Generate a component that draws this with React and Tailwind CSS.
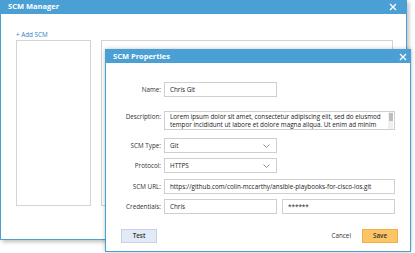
import React from 'react';

function Chevron() {
  return (
    <svg width="7" height="4" viewBox="0 0 7 4" className="mr-[6px]">
      <path d="M0.5 0.5 L3.5 3.5 L6.5 0.5" fill="none" stroke="#777" strokeWidth="0.8" />
    </svg>
  );
}

function CloseX() {
  return (
    <svg width="8" height="8" viewBox="0 0 8 8">
      <path d="M1 1 L7 7 M7 1 L1 7" stroke="#fff" strokeWidth="1.3" />
    </svg>
  );
}

function Row({ label, className = '', labelClass = 'leading-[15px]', children }) {
  return (
    <div className={`flex items-start ${className}`}>
      <div className={`w-[58px] pr-[3px] text-right text-[#333] ${labelClass}`}>{label}</div>
      {children}
    </div>
  );
}

export default function App() {
  return (
    <div className="relative w-[415px] h-[253px] bg-white overflow-hidden text-[6.3px]" style={{ fontFamily: '"Open Sans", "Noto Sans", sans-serif' }}>
      {/* SCM Manager */}
      <div className="w-[407px] h-[240px] border border-[#4a9fd5] border-t-0 bg-white shadow-[2px_2px_4px_rgba(0,0,0,0.25)]">
        <div className="h-[14px] bg-[#4a9fd5] flex items-center justify-between pl-[7px] pr-[9px]">
          <span className="text-white font-bold text-[7.5px]">SCM Manager</span>
          <CloseX />
        </div>
        <div className="pl-[15px] pt-[16px]">
          <div className="text-[#2f7fc4] leading-[9px] h-[10px]">+ Add SCM</div>
          <div className="flex gap-[10px]">
            <div className="w-[75px] h-[166px] border border-[#d4d4d4]" />
            <div className="w-[292px] h-[166px] border border-[#d4d4d4]" />
          </div>
        </div>
      </div>

      {/* SCM Properties */}
      <div className="absolute left-[105px] top-[49px] w-[306px] h-[203px] bg-white border border-[#4a9fd5] shadow-[0_0_4px_rgba(0,0,0,0.25)]">
        <div className="h-[13px] bg-[#4a9fd5] flex items-center justify-between pl-[7px] pr-[3px]">
          <span className="text-white font-bold text-[7.5px]">SCM Properties</span>
          <CloseX />
        </div>
        <div className="pt-[19px]">
          <Row label="Name:">
            <div className="w-[113px] h-[15px] border border-[#cfcfcf] px-[5px] leading-[13px] text-[#222]">Chris Git</div>
          </Row>
          <Row label="Description:" labelClass="leading-[8px] pt-[2px]" className="mt-[14px]">
            <div className="relative w-[231px] h-[19px] border border-[#cfcfcf] pl-[5px] pr-[10px] pt-[1px] leading-[8px] text-[#222] overflow-hidden">
              <div className="whitespace-nowrap">Lorem ipsum dolor sit amet, consectetur adipiscing elit, sed do eiusmod</div>
              <div className="whitespace-nowrap">tempor incididunt ut labore et dolore magna aliqua. Ut enim ad minim</div>
              <div className="absolute right-[1px] top-0 w-[5px] h-full bg-[#f0f0f0]">
                <div className="mt-[1px] h-[8px] w-[4px] mx-auto bg-[#bdbdbd]" />
              </div>
            </div>
          </Row>
          <Row label="SCM Type:" className="mt-[8px]">
            <div className="w-[113px] h-[15px] border border-[#cfcfcf] pl-[5px] flex items-center justify-between text-[#222]">
              <span>Git</span>
              <Chevron />
            </div>
          </Row>
          <Row label="Protocol:" className="mt-[5px]">
            <div className="w-[113px] h-[15px] border border-[#cfcfcf] pl-[5px] flex items-center justify-between text-[#222]">
              <span>HTTPS</span>
              <Chevron />
            </div>
          </Row>
          <Row label="SCM URL:" className="mt-[6px]">
            <div className="w-[231px] h-[15px] border border-[#cfcfcf] px-[5px] leading-[13px] text-[#222] whitespace-nowrap">https://github.com/colin-mccarthy/ansible-playbooks-for-cisco-ios.git</div>
          </Row>
          <Row label="Credentials:" className="mt-[5px]">
            <div className="flex gap-[5px]">
              <div className="w-[113px] h-[15px] border border-[#cfcfcf] px-[5px] leading-[13px] text-[#222]">Chris</div>
              <div className="w-[113px] h-[15px] border border-[#cfcfcf] px-[5px] leading-[13px] text-[#222]">******</div>
            </div>
          </Row>
          <div className="flex items-center justify-between pl-[15px] pr-[12px] mt-[15px]">
            <div className="w-[36px] h-[14px] bg-[#e2eaf7] border border-[#c5d2e6] flex items-center justify-center text-[#333] font-semibold">Test</div>
            <div className="flex items-center gap-[11px]">
              <span className="text-[#333]">Cancel</span>
              <div className="w-[36px] h-[14px] bg-[#fcc464] border border-[#efb04a] flex items-center justify-center text-[#333] font-semibold">Save</div>
            </div>
          </div>
        </div>
      </div>
    </div>
  );
}
